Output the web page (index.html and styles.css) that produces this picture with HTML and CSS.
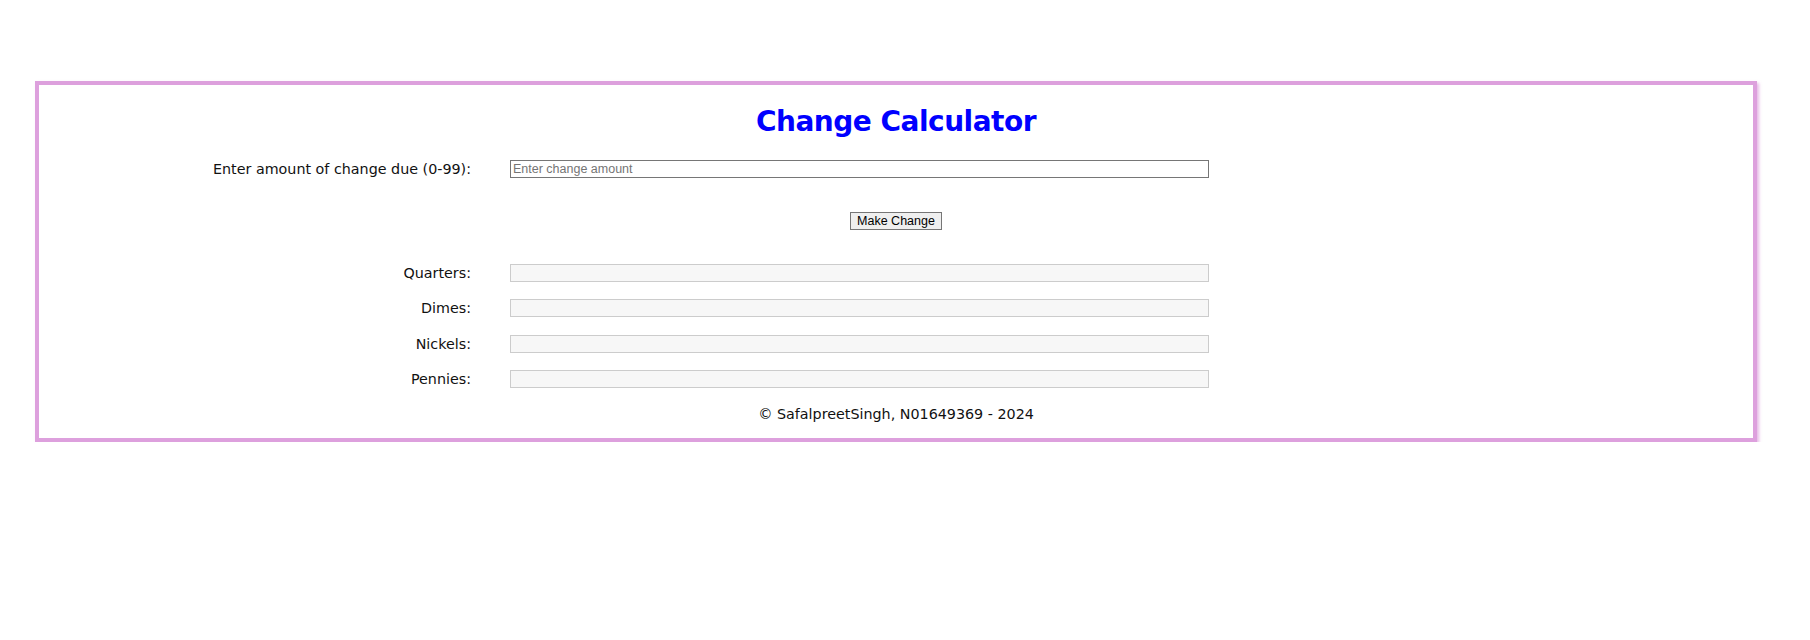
FILE: index.html
```html
<!DOCTYPE html>
<html lang="en">
<head>
<meta charset="utf-8">
<title>Change Calculator</title>
<link rel="stylesheet" href="styles.css">
</head>
<body>
<div class="page">
  <main class="card">
    <div class="inner">
      <h1 class="title">Change Calculator</h1>
      <div class="row">
        <label class="label" for="amount">Enter amount of change due (0-99):</label>
        <input class="field" id="amount" type="text" placeholder="Enter change amount">
      </div>
      <div class="actions">
        <button class="btn" type="button">Make Change</button>
      </div>
      <div class="results">
        <div class="row">
          <label class="label" for="q">Quarters:</label>
          <input class="field out" id="q" type="text" readonly>
        </div>
        <div class="row">
          <label class="label" for="d">Dimes:</label>
          <input class="field out" id="d" type="text" readonly>
        </div>
        <div class="row">
          <label class="label" for="n">Nickels:</label>
          <input class="field out" id="n" type="text" readonly>
        </div>
        <div class="row">
          <label class="label" for="p">Pennies:</label>
          <input class="field out" id="p" type="text" readonly>
        </div>
      </div>
      <footer class="footer">&copy; SafalpreetSingh, N01649369 - 2024</footer>
    </div>
  </main>
</div>
</body>
</html>
```

FILE: styles.css
```css
html, body {
  margin: 0;
  padding: 0;
  background: #ffffff;
}

.page {
  padding: 81px 0 0 35px;
}

.card {
  box-sizing: border-box;
  width: 1722px;
  border: 4px solid #dda0dd;
  box-shadow: 2px 2px 3px rgba(221, 160, 221, 0.75);
  background: #ffffff;
  font-family: "DejaVu Sans", sans-serif;
  font-size: 14.3px;
  color: #111111;
}

.inner {
  padding: 20px 0 15px 0;
  display: flex;
  flex-direction: column;
}

.title {
  margin: 0 0 21px 0;
  font-size: 28px;
  line-height: 34px;
  font-weight: bold;
  letter-spacing: -0.5px;
  color: #0000ff;
  text-align: center;
}

.row {
  display: flex;
  align-items: center;
  gap: 39px;
  height: 18px;
}

.label {
  width: 432px;
  flex: none;
  text-align: right;
  line-height: 18px;
}

.field {
  box-sizing: border-box;
  width: 699px;
  height: 18px;
  margin: 0;
  padding: 0 2px;
  border: 1px solid #767676;
  border-radius: 0;
  background: #ffffff;
  font-family: "Liberation Sans", Arial, sans-serif;
  font-size: 12.5px;
  color: #000000;
  outline: none;
}

.field::placeholder {
  color: #757575;
}

.field.out {
  border-color: #cccccc;
  background: #f7f7f7;
}

.actions {
  display: flex;
  justify-content: center;
  margin-top: 34px;
}

.btn {
  box-sizing: border-box;
  height: 18px;
  padding: 0 6px;
  border: 1px solid #767676;
  border-radius: 0;
  background: #efefef;
  font-family: "Liberation Sans", Arial, sans-serif;
  font-size: 12.5px;
  line-height: 14px;
  color: #000000;
}

.results {
  display: flex;
  flex-direction: column;
  gap: 17.3px;
  margin-top: 34px;
}

.footer {
  margin-top: 17px;
  line-height: 18px;
  text-align: center;
}
```
